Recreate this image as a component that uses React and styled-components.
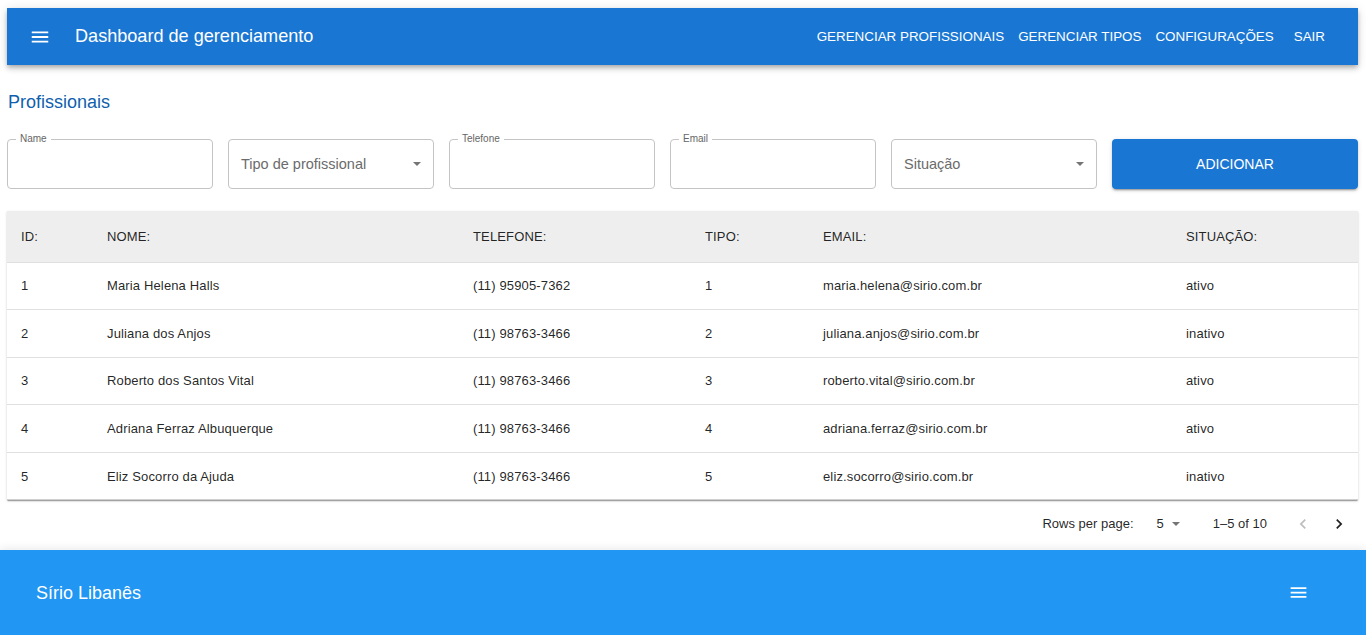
import React from 'react';
import styled, { createGlobalStyle } from 'styled-components';

const GlobalStyle = createGlobalStyle`
  body {
    margin: 0;
    font-family: "Liberation Sans", Arial, sans-serif;
    background: #fff;
  }
`

const Page = styled.div`
  min-height: 635px;
  display: flex;
  flex-direction: column;
`

const Content = styled.div`
  padding: 8px 8px 0 7px;
  display: flex;
  flex-direction: column;
`

// Header
const AppBar = styled.header`
  height: 57px;
  background: #1976d2;
  color: #fff;
  display: flex;
  align-items: center;
  padding: 0 26px 0 22px;
  box-shadow: 0 2px 4px -1px rgba(0,0,0,.2), 0 4px 5px 0 rgba(0,0,0,.14), 0 1px 10px 0 rgba(0,0,0,.12);
`

const IconBtn = styled.button`
  background: none;
  border: 0;
  padding: 0;
  display: flex;
  color: ${p => p.$color || '#fff'};
  cursor: pointer;
`

const Title = styled.h1`
  margin: -1px 0 0 24px;
  font-size: 18.1px;
  font-weight: 400;
  flex: 1;
`

const Nav = styled.nav`
  display: flex;
  margin-top: -1px;
`

const NavButton = styled.button`
  background: none;
  border: 0;
  color: #fff;
  font-family: inherit;
  font-size: 13.4px;
  text-transform: uppercase;
  padding: 6px 7px;
  cursor: pointer;
  margin-left: ${p => p.$ml || 0}px;
`

const PageTitle = styled.h2`
  margin: 27px 0 0 1px;
  font-size: 18px;
  font-weight: 400;
  color: #0f5fae;
`

// Filters
const Filters = styled.div`
  display: grid;
  grid-template-columns: repeat(5, 206px) 1fr;
  column-gap: 15px;
  margin-top: 26px;
`

const Field = styled.div`
  height: 50px;
  box-sizing: border-box;
  border: 1px solid #c4c4c4;
  border-radius: 4px;
  padding: 0 12px;
  display: flex;
  align-items: center;
  justify-content: space-between;
  position: relative;
`

const FloatLabel = styled.span`
  position: absolute;
  top: -7px;
  left: 8px;
  font-size: 10px;
  color: #666;
  padding: 0 4px;
  background: #fff;
  line-height: 12px;
`

const Placeholder = styled.span`
  font-size: 14.5px;
  color: #6b6b6b;
`

const Caret = styled.span`
  width: 0;
  height: 0;
  border-left: 4px solid transparent;
  border-right: 4px solid transparent;
  border-top: 4px solid ${p => p.$color || '#757575'};
  margin-right: ${p => p.$mr ?? 0}px;
`

const AddButton = styled.button`
  height: 50px;
  background: #1976d2;
  color: #fff;
  border: 0;
  border-radius: 4px;
  font-family: inherit;
  font-size: 14px;
  text-transform: uppercase;
  box-shadow: 0 3px 1px -2px rgba(0,0,0,.2), 0 2px 2px 0 rgba(0,0,0,.14), 0 1px 5px 0 rgba(0,0,0,.12);
  cursor: pointer;
`

// Table
const Paper = styled.div`
  margin-top: 22px;
  background: #fff;
  box-shadow: 0 2px 1px -1px rgba(0,0,0,.2), 0 1px 1px 0 rgba(0,0,0,.14), 0 1px 3px 0 rgba(0,0,0,.12);
`

const Table = styled.table`
  width: 100%;
  border-collapse: collapse;
  table-layout: fixed;
  font-size: 13px;
  letter-spacing: 0.14px;
  color: rgba(0,0,0,.87);
`

const HeadRow = styled.tr`
  background: #eeeeee;
  height: 51px;
`

const Th = styled.th`
  text-align: left;
  font-weight: 400;
  padding: 0 14px;
  border-bottom: 1px solid #e0e0e0;
`

const Row = styled.tr`
  height: 47.6px;
`

const Td = styled.td`
  padding: 0 14px;
  border-bottom: 1px solid ${p => (p.$last ? '#d0d0d0' : '#e0e0e0')};
`

const Pagination = styled.div`
  height: 47px;
  display: flex;
  align-items: center;
  justify-content: flex-end;
  font-size: 13px;
  color: rgba(0,0,0,.87);
  padding-right: 9px;
`

const RowsSelect = styled.div`
  display: flex;
  align-items: center;
  gap: 8px;
  margin: 0 33px 0 23px;
`

const Range = styled.span`
  margin-right: 26px;
`

const PageNav = styled.div`
  display: flex;
  gap: 16px;
  align-items: center;
`

// Footer
const Footer = styled.footer`
  margin-top: auto;
  height: 85px;
  background: #2196f3;
  color: #fff;
  display: flex;
  align-items: center;
  justify-content: space-between;
  padding: 0 57px 0 36px;
  box-shadow: 0 -2px 8px rgba(0,0,0,.08);
`

const FooterTitle = styled.span`
  font-size: 18px;
  margin-top: 1px;
`

const MenuIcon = ({ size = 22 }) => (
  <svg width={size} height={size} viewBox="0 0 24 24" fill="currentColor">
    <path d="M3 18h18v-2H3v2zm0-5h18v-2H3v2zm0-7v2h18V6H3z" />
  </svg>
)

const Chevron = ({ dir, color }) => (
  <svg width="20" height="20" viewBox="0 0 24 24" fill={color}>
    {dir === 'left'
      ? <path d="M15.41 7.41L14 6l-6 6 6 6 1.41-1.41L10.83 12z" />
      : <path d="M10 6L8.59 7.41 13.17 12l-4.58 4.59L10 18l6-6z" />}
  </svg>
)

const rows = [
  { id: 1, nome: 'Maria Helena Halls', tel: '(11) 95905-7362', tipo: 1, email: 'maria.helena@sirio.com.br', sit: 'ativo' },
  { id: 2, nome: 'Juliana dos Anjos', tel: '(11) 98763-3466', tipo: 2, email: 'juliana.anjos@sirio.com.br', sit: 'inativo' },
  { id: 3, nome: 'Roberto dos Santos Vital', tel: '(11) 98763-3466', tipo: 3, email: 'roberto.vital@sirio.com.br', sit: 'ativo' },
  { id: 4, nome: 'Adriana Ferraz Albuquerque', tel: '(11) 98763-3466', tipo: 4, email: 'adriana.ferraz@sirio.com.br', sit: 'ativo' },
  { id: 5, nome: 'Eliz Socorro da Ajuda', tel: '(11) 98763-3466', tipo: 5, email: 'eliz.socorro@sirio.com.br', sit: 'inativo' },
]

const App = () => (
  <Page>
    <GlobalStyle />
    <Content>
      <AppBar>
        <IconBtn><MenuIcon /></IconBtn>
        <Title>Dashboard de gerenciamento</Title>
        <Nav>
          <NavButton>Gerenciar profissionais</NavButton>
          <NavButton>Gerenciar tipos</NavButton>
          <NavButton>Configurações</NavButton>
          <NavButton $ml={6}>Sair</NavButton>
        </Nav>
      </AppBar>

      <PageTitle>Profissionais</PageTitle>

      <Filters>
        <Field><FloatLabel>Name</FloatLabel></Field>
        <Field><Placeholder>Tipo de profissional</Placeholder><Caret /></Field>
        <Field><FloatLabel>Telefone</FloatLabel></Field>
        <Field><FloatLabel>Email</FloatLabel></Field>
        <Field><Placeholder>Situação</Placeholder><Caret /></Field>
        <AddButton>Adicionar</AddButton>
      </Filters>

      <Paper>
        <Table>
          <colgroup>
            <col style={{ width: 86 }} />
            <col style={{ width: 366 }} />
            <col style={{ width: 232 }} />
            <col style={{ width: 118 }} />
            <col style={{ width: 363 }} />
            <col />
          </colgroup>
          <thead>
            <HeadRow>
              <Th>ID:</Th>
              <Th>NOME:</Th>
              <Th>TELEFONE:</Th>
              <Th>TIPO:</Th>
              <Th>EMAIL:</Th>
              <Th>SITUAÇÃO:</Th>
            </HeadRow>
          </thead>
          <tbody>
            {rows.map((r, i) => {
              const last = i === rows.length - 1
              return (
                <Row key={r.id}>
                  <Td $last={last}>{r.id}</Td>
                  <Td $last={last}>{r.nome}</Td>
                  <Td $last={last}>{r.tel}</Td>
                  <Td $last={last}>{r.tipo}</Td>
                  <Td $last={last}>{r.email}</Td>
                  <Td $last={last}>{r.sit}</Td>
                </Row>
              )
            })}
          </tbody>
        </Table>
      </Paper>

      <Pagination>
        <span>Rows per page:</span>
        <RowsSelect>
          <span>5</span>
          <Caret />
        </RowsSelect>
        <Range>1–5 of 10</Range>
        <PageNav>
          <Chevron dir="left" color="#bdbdbd" />
          <Chevron dir="right" color="#212121" />
        </PageNav>
      </Pagination>
    </Content>

    <Footer>
      <FooterTitle>Sírio Libanês</FooterTitle>
      <IconBtn><MenuIcon size={21} /></IconBtn>
    </Footer>
  </Page>
)

export default App;
